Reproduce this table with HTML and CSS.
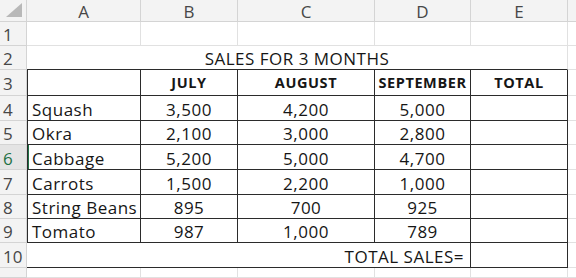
FILE: index.html
```html
<!DOCTYPE html>
<html>
<head>
<meta charset="utf-8">
<link rel="stylesheet" href="styles.css">
</head>
<body>
<div class="sheet">
  <div class="corner"><div class="tri"></div></div>
  <div class="ch">A</div><div class="ch">B</div><div class="ch">C</div><div class="ch">D</div><div class="ch">E</div><div class="ch last"></div>

  <div class="rh">1</div>
  <div class="c"></div><div class="c"></div><div class="c"></div><div class="c"></div><div class="c"></div><div class="c"></div>

  <div class="rh">2</div>
  <div class="c title">SALES FOR 3 MONTHS</div><div class="c"></div>

  <div class="rh">3</div>
  <div class="c b first"></div><div class="c b hd">JULY</div><div class="c b hd">AUGUST</div><div class="c b hd">SEPTEMBER</div><div class="c b hd">TOTAL</div><div class="c"></div>

  <div class="rh">4</div>
  <div class="c b first name">Squash</div><div class="c b num">3,500</div><div class="c b num">4,200</div><div class="c b num">5,000</div><div class="c b"></div><div class="c"></div>

  <div class="rh">5</div>
  <div class="c b first name">Okra</div><div class="c b num">2,100</div><div class="c b num">3,000</div><div class="c b num">2,800</div><div class="c b"></div><div class="c"></div>

  <div class="rh sel">6</div>
  <div class="c b first name selcell">Cabbage</div><div class="c b num">5,200</div><div class="c b num">5,000</div><div class="c b num">4,700</div><div class="c b"></div><div class="c"></div>

  <div class="rh">7</div>
  <div class="c b first name">Carrots</div><div class="c b num">1,500</div><div class="c b num">2,200</div><div class="c b num">1,000</div><div class="c b"></div><div class="c"></div>

  <div class="rh">8</div>
  <div class="c b first name">String Beans</div><div class="c b num">895</div><div class="c b num">700</div><div class="c b num">925</div><div class="c b"></div><div class="c"></div>

  <div class="rh">9</div>
  <div class="c b first name">Tomato</div><div class="c b num">987</div><div class="c b num">1,000</div><div class="c b num">789</div><div class="c b"></div><div class="c"></div>

  <div class="rh">10</div>
  <div class="c b totlabel">TOTAL SALES=</div><div class="c b"></div><div class="c"></div>

  <div class="rh r11">11</div>
  <div class="c"></div><div class="c"></div><div class="c"></div><div class="c"></div><div class="c"></div><div class="c"></div>
</div>
</body>
</html>
```
FILE: styles.css
```css
html, body {
  margin: 0;
  padding: 0;
  background: #ffffff;
  overflow: hidden;
}
.sheet {
  display: grid;
  grid-template-columns: 27px 114px 97px 137px 96px 97px 20px;
  grid-template-rows: 22px 24px 24px 26px 25px 24px 25px 25px 24px 24px 25px 10px;
  font-family: "Open Sans", "Noto Sans", sans-serif;
  color: #161616;
  width: 600px;
  height: 278px;
  overflow: hidden;
}
.sheet > div {
  box-sizing: border-box;
}
.corner {
  background: #f3f3f3;
  border-right: 1px solid #d4d4d4;
  border-bottom: 1px solid #d4d4d4;
  position: relative;
}
.tri {
  position: absolute;
  right: 4px;
  bottom: 4px;
  width: 0;
  height: 0;
  border-left: 16px solid transparent;
  border-bottom: 14px solid #b8b8b8;
}
.ch {
  background: #f3f3f3;
  border-right: 1px solid #d4d4d4;
  border-bottom: 1px solid #d4d4d4;
  color: #474747;
  font-size: 17px;
  display: flex;
  align-items: center;
  justify-content: center;
  line-height: 1;
  padding-top: 1px;
}
.rh {
  background: #f3f3f3;
  border-right: 1px solid #d4d4d4;
  border-bottom: 1px solid #d4d4d4;
  color: #474747;
  font-size: 17px;
  display: flex;
  align-items: center;
  padding-left: 3px;
  line-height: 1;
  padding-top: 2px;
}
.rh.r11 {
  align-items: flex-start;
  padding-top: 6px;
  overflow: hidden;
}
.rh.sel {
  color: #1e7145;
  background: #e4e4e4;
}
.c {
  border-right: 1px solid #e1e1e1;
  border-bottom: 1px solid #e1e1e1;
  display: flex;
  align-items: center;
  font-size: 17px;
  letter-spacing: 0.5px;
  line-height: 1;
  white-space: nowrap;
  overflow: hidden;
}
.title {
  grid-column: span 5;
  justify-content: center;
  border-bottom: 1px solid #2b2b2b;
  padding-top: 2px;
}
.c.b {
  border-right: 1px solid #2b2b2b;
  border-bottom: 1px solid #2b2b2b;
}
.c.first {
  border-left: 1px solid #2b2b2b;
}
.selcell {
  box-shadow: inset 1px 0 0 #1e7145;
}
.hd {
  justify-content: center;
  font-weight: 700;
  font-size: 14.5px;
  letter-spacing: 0.6px;
  padding-top: 2px;
}
.name {
  padding-left: 4px;
  padding-top: 2px;
}
.num {
  justify-content: center;
  padding-top: 2px;
}
.totlabel {
  grid-column: span 4;
  justify-content: flex-end;
  padding-right: 6px;
  padding-top: 2px;
}
```
